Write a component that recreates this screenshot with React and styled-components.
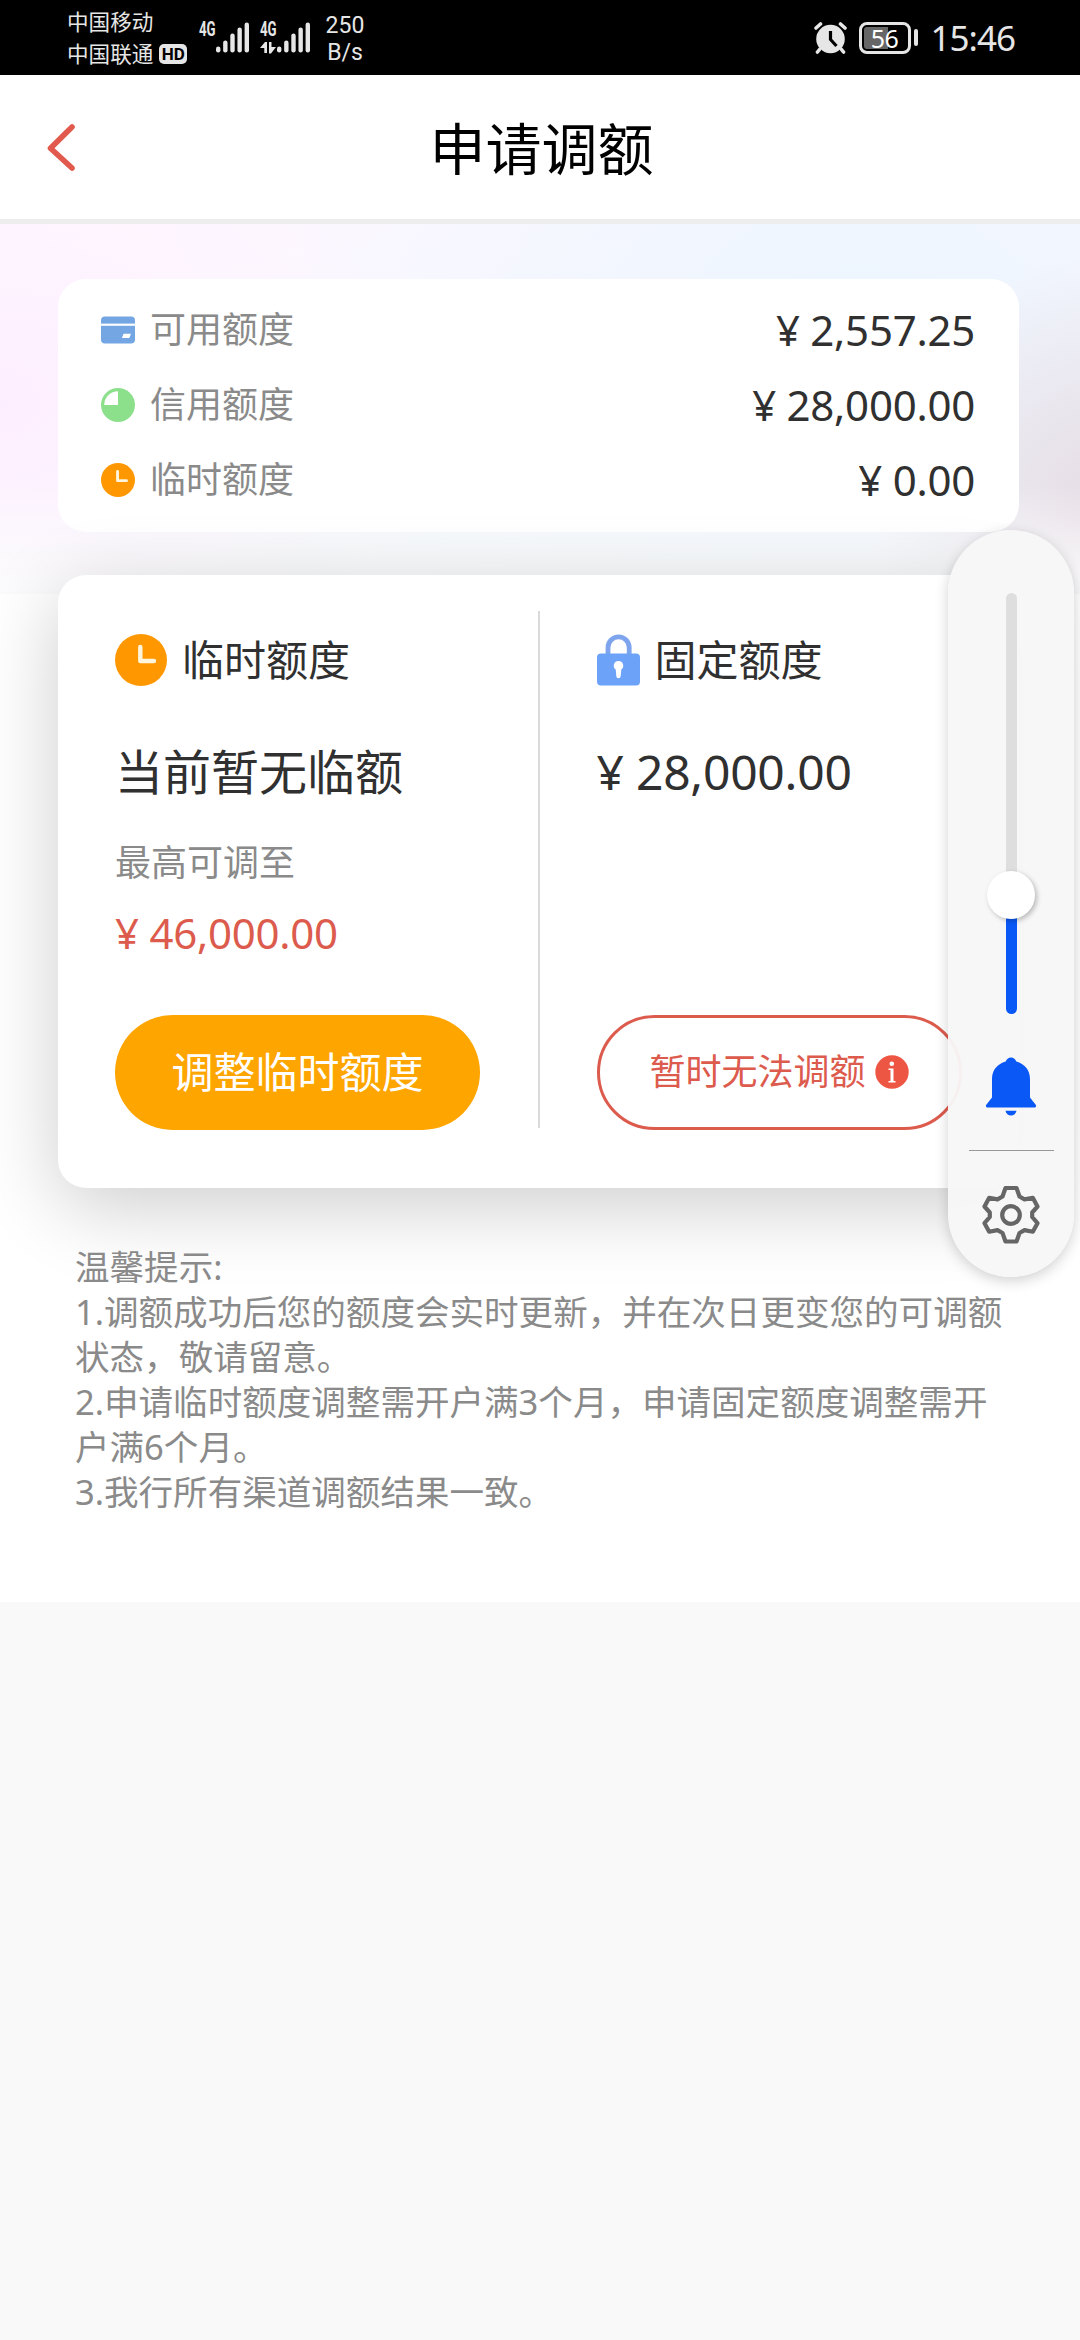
import React from "react";
import styled, { createGlobalStyle } from "styled-components";

const GlobalStyle = createGlobalStyle`
  * { box-sizing: border-box; }
  body {
    margin: 0;
    background: #f9f9f9;
    font-family: "Noto Sans", "Noto Sans CJK SC", sans-serif;
    color: #303030;
  }
  svg { display: block; flex: none; }
`;

const Screen = styled.div`
  position: relative;
  width: 1080px;
  min-height: 2340px;
  background: #f9f9f9;
`;

/* ---------- status bar ---------- */

const StatusBar = styled.div`
  display: flex;
  align-items: flex-start;
  justify-content: space-between;
  height: 75px;
  padding: 0 65px 0 67px;
  background: #000;
  color: #e6e6e6;
`;

const StatusGroup = styled.div`
  display: flex;
  align-items: flex-start;
  padding-top: ${(p) => p.$top || 0}px;
`;

const Carriers = styled.div`
  display: flex;
  flex-direction: column;
  width: 132px;
  padding-top: 6px;
  font-size: 21.6px;
  line-height: 32px;
`;

const CarrierLine = styled.div`
  display: flex;
  align-items: center;
  gap: 6px;
  white-space: nowrap;
`;

const HdBadge = styled.span`
  display: flex;
  align-items: center;
  justify-content: center;
  width: 28px;
  height: 20px;
  border-radius: 5px;
  background: #e6e6e6;
  color: #000;
  font: 700 17px/20px Roboto, sans-serif;
`;

const Signal = styled.div`
  display: flex;
  align-items: flex-start;
  width: 61px;
  height: 54px;
  padding-top: 21px;
`;

const NetworkType = styled.div`
  display: flex;
  flex-direction: column;
  width: 17px;
  svg { margin-top: 4px; }
`;

const NetworkLabel = styled.span`
  width: 25px;
  font: 700 19.5px/17px Roboto, sans-serif;
  transform: scaleX(0.68);
  transform-origin: left center;
`;

const Speed = styled.div`
  width: 50px;
  margin-left: -1px;
  padding-top: 12px;
  font: 400 23px/27px Roboto, sans-serif;
  text-align: center;
`;

const Battery = styled.div`
  display: flex;
  align-items: center;
  justify-content: center;
  width: 52px;
  height: 32px;
  margin-left: 12px;
  border: 3px solid #e6e6e6;
  border-radius: 8px;
  background: linear-gradient(90deg, #666 58%, #000 58%) content-box;
  padding: 2px;
  font: 400 25px/22px "Noto Sans", sans-serif;
  letter-spacing: -0.6px;
  color: #fff;
`;

const BatteryTip = styled.div`
  width: 4px;
  height: 17px;
  margin: 7px 13px 0 3px;
  border-radius: 2px;
  background: #e6e6e6;
`;

const Time = styled.div`
  margin-top: -2px;
  font: 400 35px/36px "Noto Sans", sans-serif;
  letter-spacing: -1px;
`;

/* ---------- header ---------- */

const Header = styled.header`
  display: grid;
  grid-template-columns: 120px 1fr 120px;
  align-items: center;
  height: 149px;
  padding-top: 2px;
  border-bottom: 5px solid #ededed;
  background: #fff;
`;

const BackButton = styled.button`
  display: flex;
  align-items: center;
  height: 100%;
  padding: 0 0 0 44px;
  border: 0;
  background: none;
`;

const PageTitle = styled.h1`
  margin: 0 0 0 3px;
  font-size: 56px;
  font-weight: 400;
  line-height: 80px;
  text-align: center;
  color: #000;
`;

/* ---------- content ---------- */

const Content = styled.main`
  height: 1378px;
  padding: 55px 61px 0 58px;
  background:
    linear-gradient(180deg, rgba(252, 252, 252, 0) 260px, rgba(252, 252, 252, 0.75) 350px, rgba(252, 252, 252, 0.8) 370px),
    radial-gradient(ellipse 420px 330px at 0% 48%, rgba(253, 238, 255, 1), rgba(254, 243, 255, 0.75) 50%, rgba(255, 246, 255, 0) 100%),
    radial-gradient(ellipse 230px 250px at 102% 76%, rgba(230, 220, 228, 1), rgba(231, 225, 233, 0.75) 45%, rgba(238, 240, 248, 0) 100%),
    radial-gradient(ellipse 620px 420px at 80% 24%, rgba(236, 245, 255, 1), rgba(240, 246, 254, 0.7) 50%, rgba(250, 250, 255, 0) 100%),
    linear-gradient(180deg, #fdf7ff 0%, #f8faff 60%, #f2f8fd 100%);
  background-size: 100% 370px;
  background-repeat: no-repeat;
  background-color: #fff;
`;

const SummaryCard = styled.section`
  height: 253px;
  padding: 13px 44px 0 43px;
  border-radius: 28px;
  background: #fff;
`;

const SummaryRow = styled.div`
  display: flex;
  align-items: center;
  height: 75px;
`;

const SummaryLabel = styled.span`
  margin-left: 15px;
  font-size: 36px;
  line-height: 50px;
  color: #8a8a8a;
`;

const Amount = styled.span`
  margin-left: ${(p) => (p.$end ? "auto" : "0")};
  font-size: ${(p) => p.$size || 42}px;
  line-height: 54px;
  letter-spacing: -0.25px;
  color: ${(p) => p.$color || "#303030"};
  white-space: nowrap;
`;

const LimitCard = styled.section`
  display: grid;
  grid-template-columns: 1fr 2px 1fr;
  height: 613px;
  margin-top: 43px;
  border-radius: 28px;
  background: #fff;
  box-shadow: 0 18px 80px rgba(0, 0, 0, 0.2);
`;

const Divider = styled.div`
  height: 517px;
  margin-top: 36px;
  background: #dadada;
`;

const LimitColumn = styled.div`
  display: flex;
  flex-direction: column;
  align-items: flex-start;
  padding: 53px 0 58px 57px;
`;

const LimitHeading = styled.div`
  display: flex;
  align-items: center;
  height: 64px;
  gap: 15px;
  font-size: 42px;
  line-height: 60px;
`;

const LimitStatus = styled.div`
  display: flex;
  align-items: center;
  height: 66px;
  margin-top: 47px;
  font-size: 48px;
  line-height: 66px;
`;

const LimitHint = styled.div`
  margin: 33px 0 18px;
  font-size: 36px;
  line-height: 50px;
  color: #8a8a8a;
`;

const PillButton = styled.button`
  display: flex;
  align-items: center;
  justify-content: center;
  gap: 9px;
  width: 365px;
  height: 115px;
  margin-top: auto;
  padding: 0 0 2px;
  border: ${(p) => (p.$outlined ? "3px solid #dc5b4d" : "0")};
  border-radius: 58px;
  background: ${(p) => (p.$outlined ? "#fff" : "#ffa500")};
  color: ${(p) => (p.$outlined ? "#dc5b4d" : "#fff")};
  font: inherit;
  font-size: ${(p) => (p.$outlined ? 36 : 42)}px;
  line-height: 60px;
`;

const Tips = styled.section`
  margin: 56px 0 0 17px;
  font-size: 34.56px;
  line-height: 45px;
  color: #8a8a8a;
  white-space: nowrap;
`;

const TipLine = styled.div`
  height: 45px;
`;

/* ---------- floating volume panel ---------- */

const VolumePanel = styled.aside`
  position: absolute;
  top: 530px;
  left: 948px;
  display: flex;
  flex-direction: column;
  align-items: center;
  width: 126px;
  height: 747px;
  padding-top: 63px;
  border-radius: 63px;
  background: rgba(247, 247, 247, 0.96);
  box-shadow: 0 4px 14px rgba(0, 0, 0, 0.18);
`;

const Track = styled.div`
  display: flex;
  flex-direction: column;
  align-items: center;
  width: 11px;
  height: 421px;
  margin-bottom: 43px;
  border-radius: 6px;
  background: linear-gradient(180deg, #dedede 303px, #0a59f7 303px);
`;

const Thumb = styled.div`
  flex: none;
  width: 48px;
  height: 48px;
  margin-top: 278px;
  border-radius: 50%;
  background: #fff;
  box-shadow: 2px 2px 5px rgba(0, 0, 0, 0.25);
`;

const PanelRule = styled.div`
  width: 85px;
  height: 1px;
  margin: 33px 0 34px;
  background: #999;
`;

/* ---------- icons ---------- */

const BackIcon = () => (
  <svg width="34" height="52" viewBox="0 0 34 52" fill="none">
    <path d="M28 5 6.500 26.200 28 46" stroke="#e15a4d" strokeWidth="5.600" strokeLinecap="round" strokeLinejoin="round" />
  </svg>
);

const BARS = [6, 12, 19, 25, 30];

const BarsIcon = () => (
  <svg width="34" height="32" viewBox="0 0 34 32" fill="#e6e6e6">
    {BARS.map((h, i) => (
      <rect key={h} x={i * 7.15} y={31.5 - h} width="4.400" height={h} rx="2.200" />
    ))}
  </svg>
);

const DataArrowsIcon = () => (
  <svg width="17" height="12" viewBox="0 0 17 12" fill="#e6e6e6">
    <path d="M0 6 5 0h2v11H4.300V6zM9 0h2.500v5H16l-5 6.500H9z" />
  </svg>
);

const AlarmIcon = () => (
  <svg width="33" height="32" viewBox="0 0 33 32" fill="none">
    <circle cx="16.500" cy="17" r="14.300" fill="#e6e6e6" />
    <path d="M2 6 6.500 2M31 6l-4.500-4M5.500 27.500 3.500 30M27.500 27.500l2 2.500" stroke="#e6e6e6" strokeWidth="3.600" strokeLinecap="round" />
    <path d="M16.500 9v8.500l6 6.500" stroke="#000" strokeWidth="3.200" strokeLinejoin="round" />
  </svg>
);

const CardIcon = () => (
  <svg width="34" height="34" viewBox="0 0 34 34">
    <rect y="3.500" width="34" height="27" rx="4" fill="#74a6e4" />
    <rect y="10.600" width="34" height="2.200" fill="#fff" />
    <path d="M22.600 20.700H30l-1.700 4.200h-7.400z" fill="#fff" />
  </svg>
);

const PieIcon = () => (
  <svg width="34" height="34" viewBox="0 0 34 34">
    <circle cx="17" cy="17" r="17" fill="#8ce08c" />
    <path d="M17 3.200V17H3.200A13.800 13.800 0 0 1 17 3.200z" fill="#fff" />
  </svg>
);

const ClockIcon = ({ size }) => (
  <svg width={size} height={size} viewBox="0 0 52 52" fill="none">
    <circle cx="26" cy="26" r="26" fill="#ff9800" />
    <path d="M25.300 13v14H39" stroke="#fff5dc" strokeWidth="4.400" strokeLinecap="round" strokeLinejoin="round" />
  </svg>
);

const LockIcon = () => (
  <svg width="43" height="52" viewBox="0 0 43 52" fill="none">
    <path d="M11 20V13.500a10.600 10.600 0 0 1 21.200 0V20" stroke="#7da4ec" strokeWidth="4.800" />
    <rect y="19.500" width="43" height="32" rx="4" fill="#6ca2f8" />
    <path d="M21.500 27a4.700 4.700 0 0 1 2.800 8.500L23.700 42a2.200 2.200 0 0 1-4.400 0l-.6-6.500a4.700 4.700 0 0 1 2.800-8.500z" fill="#fff" />
  </svg>
);

const InfoIcon = () => (
  <svg width="34" height="34" viewBox="0 0 34 34" fill="none">
    <circle cx="17" cy="17" r="16.700" fill="#ee5644" />
    <circle cx="16.800" cy="8.800" r="2.300" fill="#fff" />
    <path d="M13.500 13.500h5V26h2v1.500h-7V26h2V15h-2z" fill="#fff" />
  </svg>
);

const BellIcon = () => (
  <svg width="52" height="60" viewBox="0 0 52 60" fill="#0a59f7">
    <path d="M26 .5c2.600 0 4.600 1.700 5.300 4C39.500 6.800 45 13 45 22v18.500l5.700 7.300c.8 1.200.3 2.700-1.200 2.700h-47c-1.500 0-2-1.500-1.200-2.700L7 40.500V22C7 13 12.500 6.800 20.700 4.500c.7-2.300 2.700-4 5.300-4z" />
    <path d="M20.500 53.800h11c-.6 2.900-2.700 4.700-5.500 4.700s-4.900-1.800-5.500-4.700z" />
  </svg>
);

const GearIcon = () => (
  <svg width="58" height="60" viewBox="0 0 58 60" fill="none" stroke="#666" strokeWidth="4.200" strokeLinejoin="round">
    <path d="M23.500 3h11l3 8.500 5 2.900 8.300-1.600 4.700 8.700-5.300 6v4.500l5.300 6.200-4.700 8.500-8.300-1.600-5 2.900-3 8.500h-11l-3-8.500-5-2.900-8.300 1.600L2.500 38.200 7.800 32v-4.500l-5.300-6 4.700-8.700 8.300 1.600 5-2.900z" />
    <circle cx="29" cy="30" r="8.800" />
  </svg>
);

/* ---------- data ---------- */

const SUMMARY = [
  { icon: <CardIcon />, label: "可用额度", amount: "¥ 2,557.25" },
  { icon: <PieIcon />, label: "信用额度", amount: "¥ 28,000.00" },
  { icon: <ClockIcon size={34} />, label: "临时额度", amount: "¥ 0.00" },
];

const TIPS = [
  "温馨提示:",
  "1.调额成功后您的额度会实时更新，并在次日更变您的可调额",
  "状态，敬请留意。",
  "2.申请临时额度调整需开户满3个月，申请固定额度调整需开",
  "户满6个月。",
  "3.我行所有渠道调额结果一致。",
];

export default function App() {
  return (
    <Screen lang="zh-CN">
      <GlobalStyle />
      <StatusBar>
        <StatusGroup>
          <Carriers>
            <CarrierLine>中国移动</CarrierLine>
            <CarrierLine>
              中国联通<HdBadge>HD</HdBadge>
            </CarrierLine>
          </Carriers>
          <Signal>
            <NetworkType>
              <NetworkLabel>4G</NetworkLabel>
            </NetworkType>
            <BarsIcon />
          </Signal>
          <Signal>
            <NetworkType>
              <NetworkLabel>4G</NetworkLabel>
              <DataArrowsIcon />
            </NetworkType>
            <BarsIcon />
          </Signal>
          <Speed>
            250
            <br />
            B/s
          </Speed>
        </StatusGroup>
        <StatusGroup $top={22}>
          <AlarmIcon />
          <Battery>56</Battery>
          <BatteryTip />
          <Time>15:46</Time>
        </StatusGroup>
      </StatusBar>

      <Header>
        <BackButton aria-label="返回">
          <BackIcon />
        </BackButton>
        <PageTitle>申请调额</PageTitle>
      </Header>

      <Content>
        <SummaryCard>
          {SUMMARY.map((row) => (
            <SummaryRow key={row.label}>
              {row.icon}
              <SummaryLabel>{row.label}</SummaryLabel>
              <Amount $end>{row.amount}</Amount>
            </SummaryRow>
          ))}
        </SummaryCard>

        <LimitCard>
          <LimitColumn>
            <LimitHeading>
              <ClockIcon size={52} />
              临时额度
            </LimitHeading>
            <LimitStatus>当前暂无临额</LimitStatus>
            <LimitHint>最高可调至</LimitHint>
            <Amount $color="#dc5b4d">¥ 46,000.00</Amount>
            <PillButton>调整临时额度</PillButton>
          </LimitColumn>
          <Divider />
          <LimitColumn>
            <LimitHeading>
              <LockIcon />
              固定额度
            </LimitHeading>
            <LimitStatus>
              <Amount $size={48}>¥ 28,000.00</Amount>
            </LimitStatus>
            <PillButton $outlined>
              暂时无法调额
              <InfoIcon />
            </PillButton>
          </LimitColumn>
        </LimitCard>

        <Tips>
          {TIPS.map((line) => (
            <TipLine key={line}>{line}</TipLine>
          ))}
        </Tips>
      </Content>

      <VolumePanel>
        <Track>
          <Thumb />
        </Track>
        <BellIcon />
        <PanelRule />
        <GearIcon />
      </VolumePanel>
    </Screen>
  );
}
